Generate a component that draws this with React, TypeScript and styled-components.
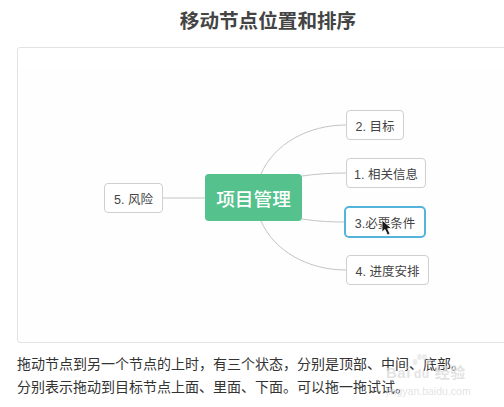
import * as React from 'react';
import styled, { createGlobalStyle } from 'styled-components';

const GlobalStyle = createGlobalStyle`
	html, body {
		margin: 0;
		padding: 0;
		background: #fff;
		overflow: hidden;
	}
	body {
		font-family: 'Liberation Sans', 'Noto Sans CJK SC', sans-serif;
		color: #333;
	}
`;

const nodes = [
	{ label: '2. 目标', x: 328, y: 62, w: 58, h: 30 },
	{ label: '1. 相关信息', x: 328, y: 110, w: 80, h: 30 },
	{ label: '3.必要条件', x: 326, y: 158, w: 82, h: 32, active: true },
	{ label: '4. 进度安排', x: 328, y: 207, w: 83, h: 30 },
	{ label: '5. 风险', x: 86, y: 135, w: 59, h: 30 },
];

const App: React.FC = () => {
	return (
		<Page>
			<GlobalStyle />
			<Title>移动节点位置和排序</Title>
			<Panel>
				<Canvas>
					<Lines width="500" height="294" viewBox="0 0 500 294" fill="none">
						<path d="M243 126 C256 96 290 77 328 77" />
						<path d="M284 128 C298 126 312 125 328 125" />
						<path d="M284 171 C298 173 310 174 326 174" />
						<path d="M243 173 C256 203 290 222 328 222" />
						<path d="M145 150 L187 150" />
					</Lines>
					<RootNode>项目管理</RootNode>
					{nodes.map((n) => (
						<TopicNode key={n.label} $x={n.x} $y={n.y} $w={n.w} $h={n.h} $active={n.active}>
							{n.label}
						</TopicNode>
					))}
					<Cursor width="12" height="17" viewBox="0 0 12 17">
						<path d="M1 1 L1 13 L4 10.5 L6.5 16 L9 15 L6.6 9.6 L10.5 9.4 Z" fill="#1a1a1a" stroke="#fff" strokeWidth="0.8" />
					</Cursor>
				</Canvas>
			</Panel>
			<Description>
				<p>拖动节点到另一个节点的上时，有三个状态，分别是顶部、中间、底部。</p>
				<p>分别表示拖动到目标节点上面、里面、下面。可以拖一拖试试。</p>
			</Description>
			<Watermark>
				<WatermarkLogo>
					Bai
					<WatermarkPaw>
						<svg width="20" height="14" viewBox="0 0 20 14" fill="#e4e4e4">
							<ellipse cx="3" cy="9" rx="2.4" ry="3" />
							<ellipse cx="7.5" cy="4" rx="2.4" ry="3" />
							<ellipse cx="12.5" cy="4" rx="2.4" ry="3" />
							<ellipse cx="17" cy="9" rx="2.4" ry="3" />
						</svg>
						du
					</WatermarkPaw>
					经验
				</WatermarkLogo>
				<WatermarkUrl>jingyan.baidu.com</WatermarkUrl>
			</Watermark>
		</Page>
	);
};

const Page = styled.div`
	position: relative;
	width: 504px;
	height: 407px;
	overflow: hidden;
	padding: 7px 0 0 17px;
	box-sizing: border-box;
`;

const Title = styled.h1`
	margin: 0 0 12px 0;
	width: 502px;
	height: 28px;
	font-size: 19.6px;
	line-height: 28px;
	font-weight: 700;
	text-align: center;
	color: #444;
`;

const Panel = styled.div`
	width: 520px;
	height: 294px;
	box-sizing: content-box;
	border: 1px solid #e3e3e3;
	border-radius: 3px;
	background: linear-gradient(#fff 19px, #fefefe 19px);
`;

const Canvas = styled.div`
	position: relative;
	width: 100%;
	height: 100%;
`;

const Lines = styled.svg`
	position: absolute;
	left: 0;
	top: 0;
	& > path {
		stroke: #c4c4c4;
		stroke-width: 1;
	}
`;

const RootNode = styled.div`
	position: absolute;
	left: 187px;
	top: 126px;
	width: 97px;
	height: 47px;
	display: flex;
	align-items: center;
	justify-content: center;
	border-radius: 4px;
	background: #55c18d;
	color: #fff;
	font-size: 18.7px;
	font-weight: 500;
`;

const TopicNode = styled.div<{ $x: number; $y: number; $w: number; $h: number; $active?: boolean }>`
	position: absolute;
	left: ${(p) => p.$x}px;
	top: ${(p) => p.$y}px;
	width: ${(p) => p.$w}px;
	height: ${(p) => p.$h}px;
	box-sizing: border-box;
	display: flex;
	align-items: center;
	justify-content: center;
	white-space: nowrap;
	background: #fff;
	border: ${(p) => (p.$active ? '2px solid #55b4dc' : '1px solid #cfcfcf')};
	border-radius: ${(p) => (p.$active ? '5px' : '4px')};
	font-size: 12.5px;
	color: #444;
`;

const Cursor = styled.svg`
	position: absolute;
	left: 363px;
	top: 171px;
`;

const Description = styled.div`
	margin-top: 10px;
	font-size: 14px;
	line-height: 23px;
	color: #333;
	white-space: nowrap;
	& > p {
		margin: 0;
	}
`;

const Watermark = styled.div`
	position: absolute;
	left: 386px;
	top: 352px;
	width: 90px;
	color: rgba(220, 220, 220, 0.8);
	pointer-events: none;
`;

const WatermarkLogo = styled.div`
	display: flex;
	align-items: flex-end;
	height: 29px;
	font-size: 15px;
	font-weight: 700;
	line-height: 16px;
	letter-spacing: 0.5px;
`;

const WatermarkPaw = styled.span`
	display: flex;
	flex-direction: column;
	align-items: center;
	margin: 0 3px 0 1px;
	font-size: 12px;
	line-height: 14px;
	& > svg {
		opacity: 0.7;
	}
`;

const WatermarkUrl = styled.div`
	font-size: 10.5px;
	line-height: 12px;
	margin-top: 4px;
	white-space: nowrap;
`;

export default App;
